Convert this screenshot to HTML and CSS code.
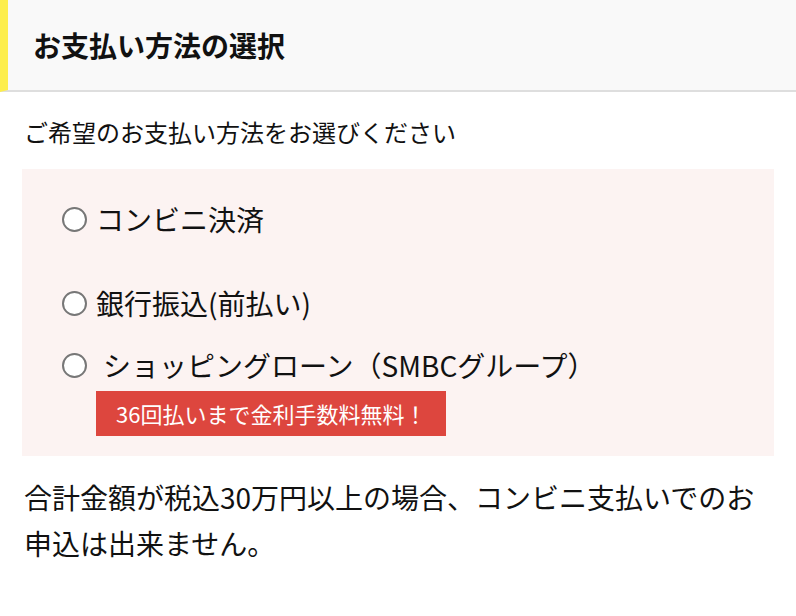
FILE: index.html
```html
<!DOCTYPE html>
<html lang="ja">
<head>
<meta charset="utf-8">
<link rel="stylesheet" href="styles.css">
</head>
<body>
<div class="header"><h1 class="title">お支払い方法の選択</h1></div>
<div class="content">
  <p class="lead">ご希望のお支払い方法をお選びください</p>
  <div class="options">
    <label class="opt opt-first"><input type="radio" name="pay" class="radio"><span>コンビニ決済</span></label>
    <label class="opt opt-second"><input type="radio" name="pay" class="radio"><span>銀行振込(前払い)</span></label>
    <label class="opt opt-third"><input type="radio" name="pay" class="radio"><span class="spaced">ショッピングローン（SMBCグループ）</span></label>
    <div class="badge">36回払いまで金利手数料無料！</div>
  </div>
  <p class="note">合計金額が税込30万円以上の場合、コンビニ支払いでのお申込は出来ません。</p>
</div>
</body>
</html>
```
FILE: styles.css
```css
html, body {
  margin: 0;
  padding: 0;
  background: #ffffff;
}
body {
  font-family: "Noto Sans CJK JP", "Noto Sans", sans-serif;
  color: #111111;
}
.header {
  height: 90px;
  background: #f9f9f9;
  border-left: 8px solid #fdee4c;
  border-bottom: 2px solid #dedede;
  display: flex;
  align-items: center;
  padding-left: 25px;
}
.title {
  margin: 0;
  font-size: 28px;
  font-weight: 700;
  line-height: 1;
}
.content {
  padding: 0 22px;
}
.lead {
  margin: 24px 0 0 2px;
  font-size: 24px;
  line-height: 32px;
}
.options {
  margin-top: 21px;
  background: #fcf3f2;
  padding: 32px 0 20px 40px;
}
.opt {
  display: flex;
  align-items: center;
  font-size: 28px;
  line-height: 36px;
}
.opt-second {
  margin-top: 48px;
}
.opt-third {
  margin-top: 26px;
}
.radio {
  appearance: none;
  -webkit-appearance: none;
  width: 25px;
  height: 25px;
  margin: 0 9px 0 0;
  border: 2px solid #777777;
  border-radius: 50%;
  background: #ffffff;
  box-sizing: border-box;
  flex: none;
}
.spaced {
  padding-left: 7px;
}
.badge {
  display: inline-block;
  margin: 8px 0 0 34px;
  height: 45px;
  line-height: 45px;
  padding: 0 20px 0 20px;
  background: #dd463e;
  color: #ffffff;
  font-size: 22px;
}
.note {
  margin: 18px 0 0 2px;
  font-size: 28px;
  line-height: 46px;
}
```
